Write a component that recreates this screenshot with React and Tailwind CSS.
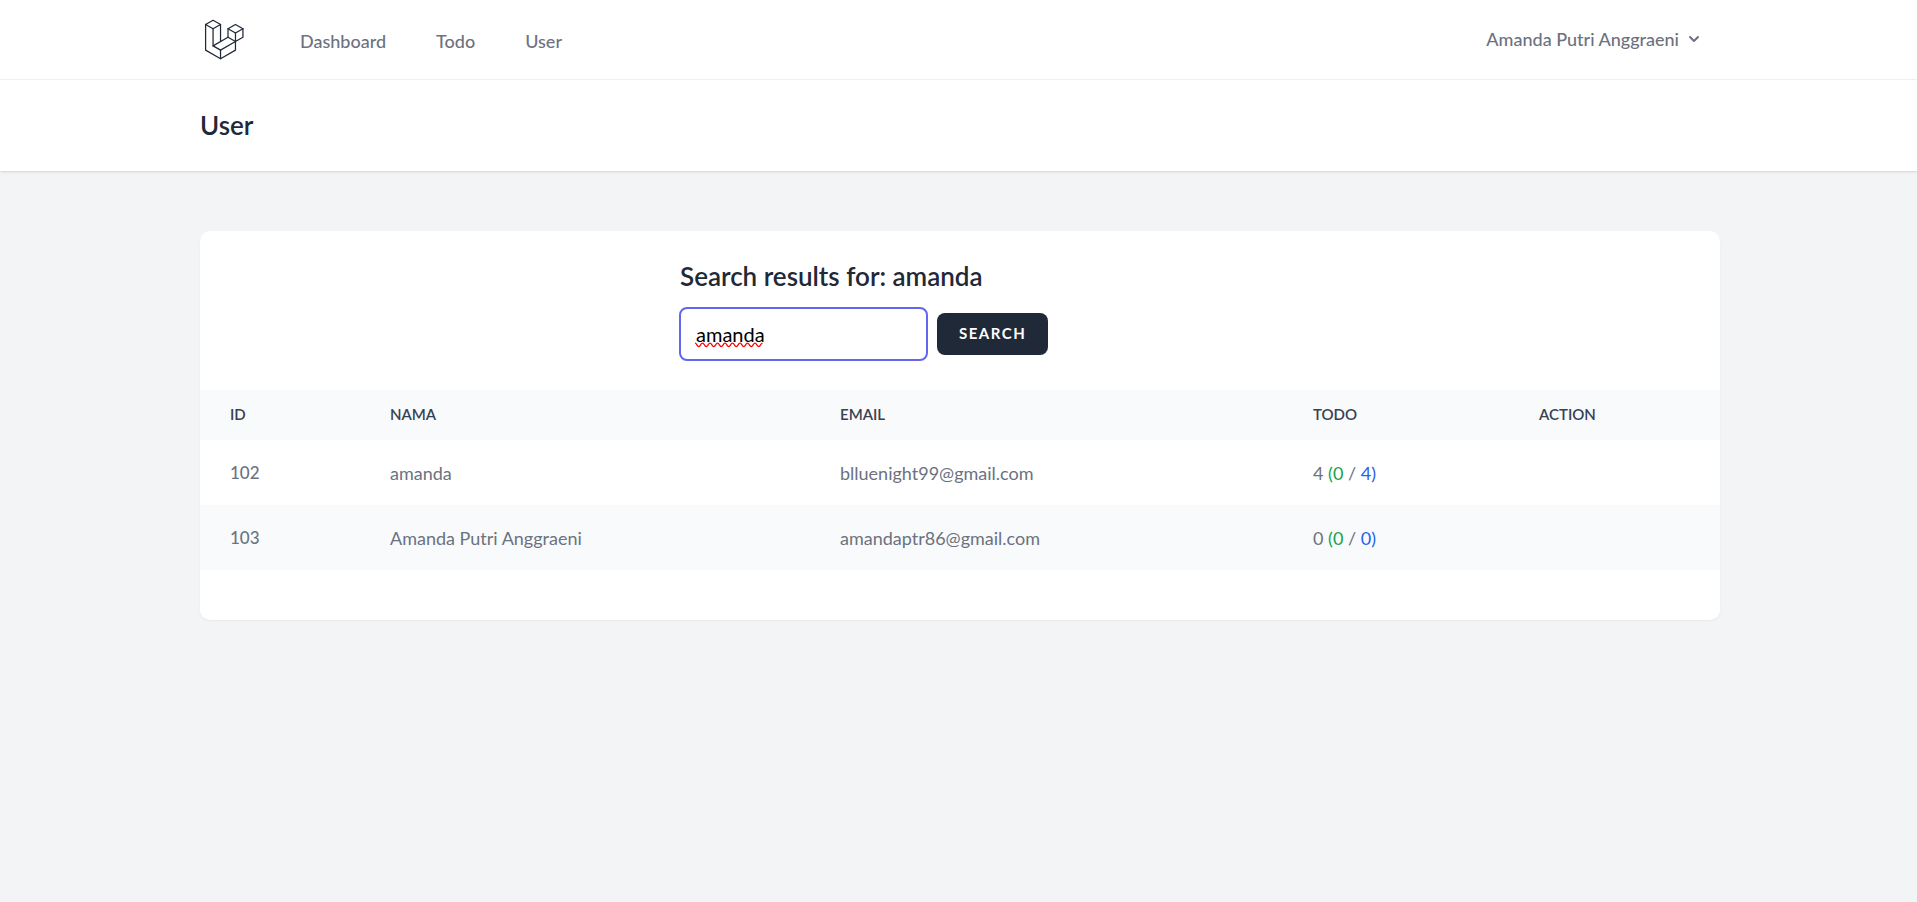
const links = ["Dashboard", "Todo", "User"];

const users = [
  { id: 102, name: "amanda", email: "blluenight99@gmail.com", total: 4, done: 0, open: 4 },
  { id: 103, name: "Amanda Putri Anggraeni", email: "amandaptr86@gmail.com", total: 0, done: 0, open: 0 },
];

function Logo() {
  return (
    <svg viewBox="0 0 316 316" className="size-[45px]" fill="none" stroke="#1f2937" strokeWidth="8.75" strokeLinejoin="round" strokeLinecap="round" aria-hidden="true">
      <path d="M39.3 52.6 91.8 22.4l52.4 30.2-52.4 30.2z" />
      <path d="M39.3 52.6v180.1l104.9 60.4 104.9-60.4v-60.4l-104.9 60.4-52.4-30.2V82.8" />
      <path d="M144.2 52.6v119.7M144.2 232.7v60.4M91.8 202.5l104.9-60.4 52.4 30.2" />
      <path d="M196.7 82.3l52.4-30.2 52.4 30.2-52.4 30.2z" />
      <path d="M196.7 82.3v59.8M249.1 112.5v59.8l52.4-30.2V82.3" />
    </svg>
  );
}

function SpellingMark() {
  return (
    <svg viewBox="0 0 70 6" className="pointer-events-none absolute top-[35px] left-4 h-1.5 w-[70px]" fill="none" stroke="#ff0000" strokeWidth="1.25" aria-hidden="true">
      <path d="M0 1.2c1.9 0 1.9 3.4 3.75 3.4s1.9-3.4 3.75-3.4 1.9 3.4 3.75 3.4 1.9-3.4 3.75-3.4 1.9 3.4 3.75 3.4 1.9-3.4 3.75-3.4 1.9 3.4 3.75 3.4 1.9-3.4 3.75-3.4 1.9 3.4 3.75 3.4 1.9-3.4 3.75-3.4 1.9 3.4 3.75 3.4 1.9-3.4 3.75-3.4 1.9 3.4 3.75 3.4 1.9-3.4 3.75-3.4 1.9 3.4 3.75 3.4 1.9-3.4 3.75-3.4 1.9 3.4 3.75 3.4 1.9-3.4 3.75-3.4" />
    </svg>
  );
}

function Container({ className, children }) {
  return (
    <div className="pl-[3px]">
      <div className={"mx-auto max-w-[1600px] px-10 " + (className || "")}>{children}</div>
    </div>
  );
}

export default function App() {
  return (
    <div className="min-h-screen bg-[#f3f4f6] font-[Lato,sans-serif] text-lg">
      <nav className="border-b border-[#f3f4f6] bg-white">
        <Container className="flex h-[79px] items-center justify-between">
          <div className="flex items-center">
            <a href="#" aria-label="Home"><Logo /></a>
            <div className="ml-[55px] flex gap-[50px] pt-0.5 font-medium text-[#6b7280]">
              {links.map((l) => <a key={l} href="#">{l}</a>)}
            </div>
          </div>
          <button type="button" className="mr-4 mb-0.5 flex items-center gap-[5px] font-medium text-[#6b7280]">
            Amanda Putri Anggraeni
            <svg viewBox="0 0 20 20" className="size-5" fill="currentColor" aria-hidden="true">
              <path d="M5.293 7.293a1 1 0 011.414 0L10 10.586l3.293-3.293a1 1 0 111.414 1.414l-4 4a1 1 0 01-1.414 0l-4-4a1 1 0 010-1.414z" />
            </svg>
          </button>
        </Container>
      </nav>
      <header className="relative bg-white shadow">
        <Container className="py-[30px]">
          <h2 className="text-[26px] leading-[31px] font-semibold text-[#1f2937]">User</h2>
        </Container>
      </header>
      <main className="py-[60px]">
        <Container>
          <section className="overflow-hidden rounded-[10px] bg-white pb-[50px] shadow-xs">
            <div className="ml-[480px] pt-[30px] pb-[29px]">
              <h3 className="text-[26px] leading-[31px] font-semibold text-[#1f2937]">Search results for: amanda</h3>
              <form className="mt-[15px] flex items-center gap-[9px]" onSubmit={(e) => e.preventDefault()}>
                <div className="relative -ml-px flex">
                  <input aria-label="Search" defaultValue="amanda" className="h-[54px] w-[249px] rounded-lg border-2 border-[#6366f1] bg-white px-[15px] text-xl text-black outline-none" />
                  <SpellingMark />
                </div>
                <button type="submit" className="h-[42px] rounded-lg bg-[#1f2937] px-[22px] text-[15px] font-bold tracking-widest text-white uppercase">Search</button>
              </form>
            </div>
            <table className="w-full table-fixed text-left text-[#6b7280]">
              <thead className="bg-[#f9fafb] text-[15px] text-[#374151] uppercase">
                <tr className="h-[50px]">
                  <th className="w-[160px] px-[30px] font-semibold">Id</th>
                  <th className="w-[450px] px-[30px] font-semibold">Nama</th>
                  <th className="w-[473px] px-[30px] font-semibold">Email</th>
                  <th className="w-[226px] px-[30px] font-semibold">Todo</th>
                  <th className="px-[30px] font-semibold">Action</th>
                </tr>
              </thead>
              <tbody>
                {users.map((u) => (
                  <tr key={u.id} className="h-[65px] even:bg-[#f9fafb]">
                    <td className="px-[30px] font-medium"><span className="text-[17px]">{u.id}</span></td>
                    <td className="px-[30px]">{u.name}</td>
                    <td className="px-[30px]">{u.email}</td>
                    <td className="px-[30px]">
                      {u.total} <span className="text-[#16a34a]">({u.done}</span> / <span className="text-[#2563eb]">{u.open})</span>
                    </td>
                    <td className="px-[30px]" />
                  </tr>
                ))}
              </tbody>
            </table>
          </section>
        </Container>
      </main>
    </div>
  );
}
